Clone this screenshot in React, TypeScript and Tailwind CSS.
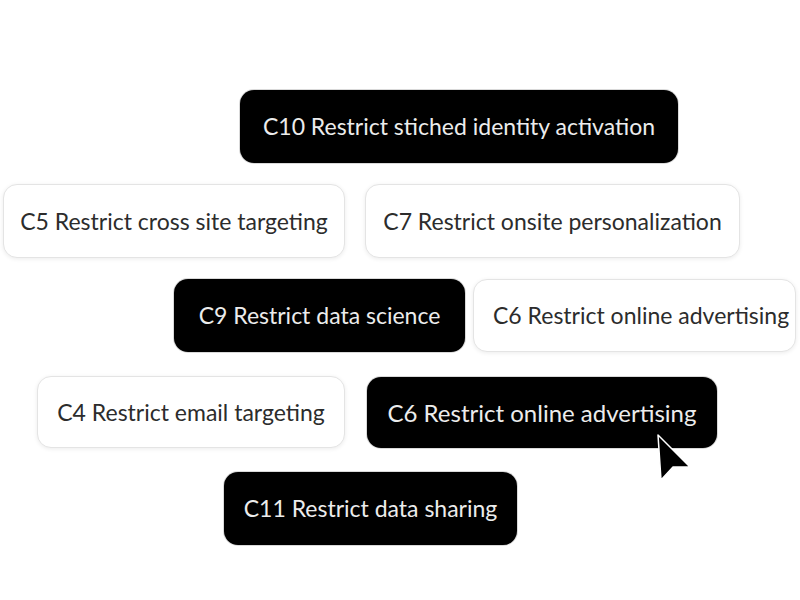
const chipBase =
  "flex shrink-0 items-center justify-center rounded-[14px] font-['Lato',sans-serif] text-[23px] whitespace-nowrap";

function Chip({
  label,
  dark,
  className,
  children,
}: {
  label: string;
  dark?: boolean;
  className?: string;
  children?: React.ReactNode;
}) {
  return (
    <div
      className={`${chipBase} ${
        dark
          ? "bg-black text-[#ececec] shadow-[0_0_0_1px_rgba(0,0,0,0.15)]"
          : "bg-white text-[#2c2c2c] border border-[#e4e4e4] shadow-[0_1px_4px_rgba(0,0,0,0.08)]"
      } ${className ?? ""}`}
    >
      {label}
      {children}
    </div>
  );
}

function Cursor() {
  return (
    <svg
      className="absolute left-[289px] top-[56px]"
      width="38"
      height="52"
      viewBox="0 0 38 52"
    >
      <path
        d="M2 2 L5 47 L17 34 L34 34 Z"
        fill="#000"
        stroke="#fff"
        strokeWidth="1.5"
        strokeLinejoin="round"
      />
    </svg>
  );
}

export default function App() {
  return (
    <div className="h-[600px] w-[800px] overflow-hidden bg-white">
      <div className="flex flex-col pt-[90px]">
        <div className="flex pl-[240px]">
          <Chip dark label="C10 Restrict stiched identity activation" className="h-[73px] w-[438px]" />
        </div>

        <div className="mt-[21px] flex gap-[20px] pl-[3px]">
          <Chip label="C5 Restrict cross site targeting" className="h-[74px] w-[342px]" />
          <Chip label="C7 Restrict onsite personalization" className="h-[74px] w-[375px]" />
        </div>

        <div className="mt-[21px] flex gap-[8px] pl-[174px]">
          <Chip dark label="C9 Restrict data science" className="h-[73px] w-[291px]" />
          <Chip label="C6 Restrict online advertising" className="h-[73px] w-[323px] justify-start pl-[19px]" />
        </div>

        <div className="mt-[24px] flex items-start gap-[22px] pl-[37px]">
          <Chip label="C4 Restrict email targeting" className="h-[72px] w-[308px]" />
          <Chip
            dark
            label="C6 Restrict online advertising"
            className="relative mt-[1px] h-[71px] w-[350px] text-[24px]"
          >
            <Cursor />
          </Chip>
        </div>

        <div className="mt-[24px] flex pl-[224px]">
          <Chip dark label="C11 Restrict data sharing" className="h-[73px] w-[293px]" />
        </div>
      </div>
    </div>
  );
}
